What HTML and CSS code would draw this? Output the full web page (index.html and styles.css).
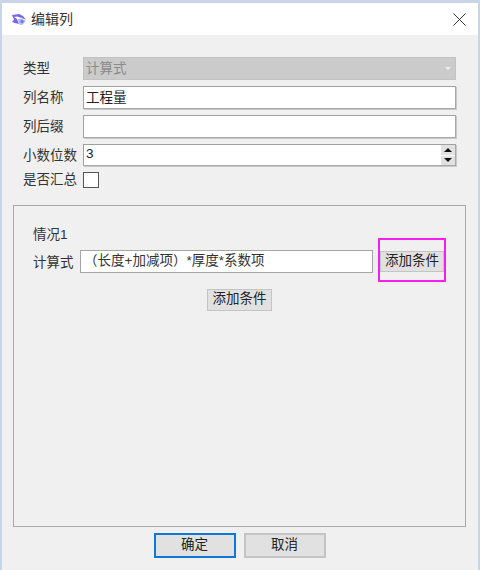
FILE: index.html
```html
<!DOCTYPE html>
<html>
<head>
    <title>编辑列</title>
    <meta charset="utf-8">
    <link rel="stylesheet" href="styles.css">
</head>
<body>
    <div class="window">
        <div class="title-bar">
            <svg class="app-icon" width="16" height="13" viewBox="0 0 16 13">
                <path d="M1 2 L8 1 L12 3 L15 7 L11 5 L6 3.5 L3 4 L6 6 L8 11 L4 10 L1 9 L3 6.5 Z" fill="#7d63ea"/>
                <path d="M7 6 L11 5.5 L14.5 8 L12 11.5 L9 12 L7.5 9 Z" fill="#aebcf6"/>
                <circle cx="11" cy="8.5" r="1.5" fill="#5f7ae8"/>
            </svg>
            <span class="title-text">编辑列</span>
            <svg class="close-icon" width="13" height="13" viewBox="0 0 13 13">
                <path d="M0.5 0.5 L12.5 12.5 M12.5 0.5 L0.5 12.5" stroke="#333" stroke-width="1" fill="none"/>
            </svg>
        </div>
        <div class="content">
            <div class="form">
                <div class="form-row">
                    <label class="field-label">类型</label>
                    <div class="field field-disabled">
                        <span class="field-text">计算式</span>
                        <span class="select-arrow"></span>
                    </div>
                </div>
                <div class="form-row">
                    <label class="field-label">列名称</label>
                    <div class="field"><span class="field-text dark">工程量</span></div>
                </div>
                <div class="form-row">
                    <label class="field-label">列后缀</label>
                    <div class="field"></div>
                </div>
                <div class="form-row row-spin">
                    <label class="field-label">小数位数</label>
                    <div class="field">
                        <span class="field-text dark">3</span>
                        <div class="spin">
                            <div class="spin-btn"><span class="arrow-up"></span></div>
                            <div class="spin-btn"><span class="arrow-down"></span></div>
                        </div>
                    </div>
                </div>
                <div class="form-row row-check">
                    <label class="field-label">是否汇总</label>
                    <div class="checkbox"></div>
                </div>
            </div>
            <div class="group">
                <div class="case-title">情况1</div>
                <div class="case-row">
                    <label class="case-label">计算式</label>
                    <div class="case-input">（长度+加减项）*厚度*系数项</div>
                    <div class="case-action">
                        <button class="btn btn-small">添加条件</button>
                        <div class="highlight"></div>
                    </div>
                </div>
                <div class="add-row">
                    <button class="btn btn-add">添加条件</button>
                </div>
            </div>
            <div class="footer">
                <button class="btn btn-footer btn-primary">确定</button>
                <button class="btn btn-footer">取消</button>
            </div>
        </div>
    </div>
</body>
</html>
```

FILE: styles.css
```css
* {
    margin: 0;
    padding: 0;
    box-sizing: border-box;
}

html, body {
    width: 100%;
    height: 100%;
    overflow: hidden;
}

body {
    background: #c9d5e6;
    padding: 3px 2px 0 2px;
    font-family: "Liberation Sans", "Noto Sans CJK SC", sans-serif;
    font-size: 14px;
    color: #333;
}

.window {
    height: 567px;
    display: flex;
    flex-direction: column;
    background: #f0f0f0;
}

.title-bar {
    height: 32px;
    flex: none;
    display: flex;
    align-items: center;
    background: #fff;
    padding: 0 12px 0 9px;
}

.app-icon {
    margin-right: 4px;
}

.title-text {
    flex: 1;
    font-size: 14px;
    padding-bottom: 2px;
}

.content {
    flex: 1;
    display: flex;
    flex-direction: column;
    padding: 22px 12px 0 11px;
}

.form {
    display: flex;
    flex-direction: column;
    padding: 0 10px;
}

.form-row {
    display: flex;
    align-items: center;
    height: 23px;
    margin-bottom: 6px;
}

.row-spin {
    height: 22px;
    margin-bottom: 5px;
}

.row-check {
    height: 17px;
    margin-bottom: 0;
}

.field-label {
    width: 60px;
    flex: none;
    font-size: 13.5px;
    padding-bottom: 3px;
}

.field {
    flex: 1;
    height: 100%;
    display: flex;
    align-items: center;
    position: relative;
    background: #fff;
    border: 1px solid #a8a8a8;
    border-top-color: #a0a0a0;
    border-left-color: #a0a0a0;
    box-shadow: 1px 1px 0 #c8c8c8;
}

.field-disabled {
    background: #cbcbcb;
    border-color: #c2c2c2;
    box-shadow: none;
}

.field-text {
    padding-left: 2px;
    padding-bottom: 3px;
    font-size: 13.5px;
    color: #8a8a8a;
}

.field-text.dark {
    color: #222;
}

.select-arrow {
    position: absolute;
    right: 4px;
    top: 9px;
    border-left: 3px solid transparent;
    border-right: 3px solid transparent;
    border-top: 3px solid #eeeeee;
}

.spin {
    margin-left: auto;
    width: 14px;
    height: 100%;
    display: flex;
    flex-direction: column;
    gap: 1px;
    background: #fff;
}

.spin-btn {
    flex: 1;
    display: flex;
    align-items: center;
    justify-content: center;
    background: #e1e1e1;
}

.arrow-up, .arrow-down {
    width: 0;
    height: 0;
    border-left: 4px solid transparent;
    border-right: 4px solid transparent;
}

.arrow-up {
    border-bottom: 4px solid #111;
}

.arrow-down {
    border-top: 4px solid #111;
}

.checkbox {
    width: 16px;
    height: 16px;
    background: #fff;
    border: 1px solid #555;
}

.group {
    height: 322px;
    flex: none;
    margin-top: 17px;
    border: 1px solid #a8a8a8;
    padding: 20px 21px 0 19px;
}

.case-title {
    height: 18px;
    line-height: 18px;
    font-size: 13.5px;
    margin-bottom: 6px;
}

.case-row {
    display: flex;
    align-items: center;
    height: 23px;
}

.case-label {
    width: 47px;
    flex: none;
    font-size: 13.5px;
    padding-bottom: 2px;
}

.case-input {
    width: 293px;
    height: 23px;
    line-height: 20px;
    padding-left: 3px;
    background: #fff;
    border: 1px solid #a6a6a6;
    font-size: 13.5px;
    white-space: nowrap;
    overflow: hidden;
}

.case-action {
    position: relative;
    margin-left: 7px;
}

.btn {
    display: block;
    font-family: inherit;
    font-size: 13.5px;
    line-height: 14px;
    color: #222;
    background: #e1e1e1;
    border: 1px solid #c4c4c4;
    padding-bottom: 2px;
}

.btn-small {
    width: 64px;
    height: 21px;
}

.btn-add {
    width: 65px;
    height: 22px;
}

.highlight {
    position: absolute;
    left: -2px;
    top: -13px;
    width: 68px;
    height: 44px;
    border: 2px solid #f81ef0;
}

.add-row {
    display: flex;
    justify-content: center;
    margin-top: 16px;
    padding-left: 2px;
}

.footer {
    display: flex;
    justify-content: center;
    gap: 8px;
    margin-top: 6px;
}

.btn-footer {
    width: 82px;
    height: 25px;
    border-width: 2px;
    border-color: #c4c4c4;
}

.btn-primary {
    border-color: #0f78d4;
}
```
